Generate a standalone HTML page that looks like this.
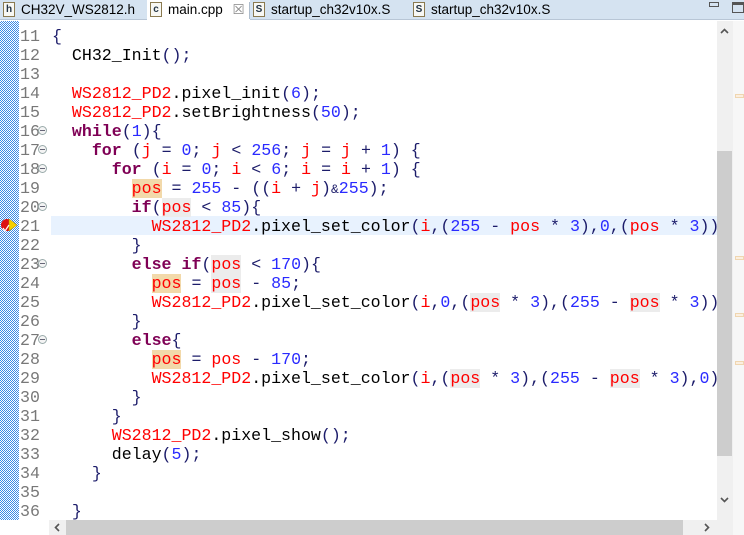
<!DOCTYPE html>
<html><head><meta charset="utf-8"><style>
*{margin:0;padding:0;box-sizing:border-box}
body{width:744px;height:535px;overflow:hidden;background:#fff;position:relative;font-family:"Liberation Sans",sans-serif}
#tabs{position:absolute;left:0;top:0;width:744px;height:20px;background:#d5e3f1;border-bottom:1px solid #b8c6d6}
.tab{position:absolute;top:0;height:20px;font-size:13.5px;color:#000;line-height:19px;padding-left:21px}
.tab .ic{position:absolute;left:3px;top:2px;width:12px;height:15px;border:1px solid #8a7a50;background:#f8f8f4;font-size:10px;line-height:13px;text-align:center;color:#234;font-weight:bold}
.tab.act{background:#fff;height:21px}
.sep{position:absolute;top:2px;width:1px;height:17px;background:#aebdcd}
#gut{position:absolute;left:0;top:21px;width:19px;height:499px;
background-color:#fff;background-image:linear-gradient(45deg,#3a8ae6 25%,transparent 25%,transparent 75%,#3a8ae6 75%),linear-gradient(45deg,#3a8ae6 25%,transparent 25%,transparent 75%,#3a8ae6 75%);background-size:2px 2px;background-position:0 0,1px 1px}
.ln{position:absolute;left:20px;height:19px;font-family:"Liberation Mono",monospace;font-size:16.6px;color:#787878;line-height:19px}
.fold{position:absolute;left:38px;width:9px;height:9px;border:1px solid #9aa;border-radius:50%;background:#f4f4f4}
.fold:after{content:"";position:absolute;left:1px;top:3px;width:5px;height:1px;background:#667}
#cur{position:absolute;left:51px;top:216px;width:666px;height:19px;background:#e8f2fe}
.cl{position:absolute;left:52px;height:19px;font-family:"Liberation Mono",monospace;font-size:16.6px;line-height:19px;white-space:pre;color:#000}
.k{color:#7f0055;font-weight:bold}.r{color:#f00}.n{color:#2a2aff}.o{color:#1c1c6a}
.w{background:#f2d9aa}.rd{background:#ececec}
#vs{position:absolute;left:717px;top:21px;width:16px;height:499px;background:#f0f0f0}
#vth{position:absolute;left:717px;top:151px;width:15px;height:305px;background:#cdcdcd}
#ov{position:absolute;left:733px;top:21px;width:11px;height:514px;background:#f7f7f7}
.om{position:absolute;left:735px;width:9px;height:4px;border:1px solid #f0d6b0;background:#fbefe0}
#hs{position:absolute;left:49px;top:520px;width:684px;height:15px;background:#f0f0f0}
#hth{position:absolute;left:66px;top:520px;width:617px;height:15px;background:#cdcdcd}
</style></head><body>
<div id="tabs">
<div class="tab" style="left:0;width:147px"><span class="ic">h</span>CH32V_WS2812.h</div>
<div class="tab act" style="left:147px;width:103px"><span class="ic">c</span>main.cpp <span style="color:#888;margin-left:6px">☒</span></div>
<div class="tab" style="left:250px;width:160px"><span class="ic">S</span>startup_ch32v10x.S</div>
<div class="sep" style="left:249px"></div>
<div class="tab" style="left:410px;width:150px"><span class="ic">S</span>startup_ch32v10x.S</div>
<div style="position:absolute;left:709px;top:2px;width:10px;height:5px;border:1px solid #555"></div>
<div style="position:absolute;left:732px;top:2px;width:12px;height:11px;border:1px solid #555;border-top-width:3px"></div>
</div>
<div id="gut"></div>
<div id="cur"></div>
<svg style="position:absolute;left:0;top:217px" width="19" height="17"><circle cx="7" cy="8" r="6" fill="#d11"/><polygon points="9,2 17,8 9,14" fill="#f5d000" stroke="#a80" stroke-width="0.5"/><path d="M3 11 L5 14 L9 8" stroke="#fff" fill="none" stroke-width="1.2"/></svg>

<div class="ln" style="top:27px">11</div><div class="ln" style="top:46px">12</div><div class="ln" style="top:65px">13</div><div class="ln" style="top:84px">14</div><div class="ln" style="top:103px">15</div><div class="ln" style="top:122px">16</div><div class="ln" style="top:141px">17</div><div class="ln" style="top:160px">18</div><div class="ln" style="top:179px">19</div><div class="ln" style="top:198px">20</div><div class="ln" style="top:217px">21</div><div class="ln" style="top:236px">22</div><div class="ln" style="top:255px">23</div><div class="ln" style="top:274px">24</div><div class="ln" style="top:293px">25</div><div class="ln" style="top:312px">26</div><div class="ln" style="top:331px">27</div><div class="ln" style="top:350px">28</div><div class="ln" style="top:369px">29</div><div class="ln" style="top:388px">30</div><div class="ln" style="top:407px">31</div><div class="ln" style="top:426px">32</div><div class="ln" style="top:445px">33</div><div class="ln" style="top:464px">34</div><div class="ln" style="top:483px">35</div><div class="ln" style="top:502px">36</div>
<div class="fold" style="top:126px"></div><div class="fold" style="top:145px"></div><div class="fold" style="top:164px"></div><div class="fold" style="top:202px"></div><div class="fold" style="top:259px"></div><div class="fold" style="top:335px"></div>

<div class="cl" style="top:27px"><span class="o">{</span></div>
<div class="cl" style="top:46px">  CH32_Init<span class="o">();</span></div>
<div class="cl" style="top:84px">  <span class="r">WS2812_PD2</span>.pixel_init<span class="o">(</span><span class="n">6</span><span class="o">);</span></div>
<div class="cl" style="top:103px">  <span class="r">WS2812_PD2</span>.setBrightness<span class="o">(</span><span class="n">50</span><span class="o">);</span></div>
<div class="cl" style="top:122px">  <span class="k">while</span><span class="o">(</span><span class="n">1</span><span class="o">){</span></div>
<div class="cl" style="top:141px">    <span class="k">for</span> <span class="o">(</span><span class="r">j</span> <span class="o">=</span> <span class="n">0</span><span class="o">;</span> <span class="r">j</span> <span class="o">&lt;</span> <span class="n">256</span><span class="o">;</span> <span class="r">j</span> <span class="o">=</span> <span class="r">j</span> <span class="o">+</span> <span class="n">1</span><span class="o">)</span> <span class="o">{</span></div>
<div class="cl" style="top:160px">      <span class="k">for</span> <span class="o">(</span><span class="r">i</span> <span class="o">=</span> <span class="n">0</span><span class="o">;</span> <span class="r">i</span> <span class="o">&lt;</span> <span class="n">6</span><span class="o">;</span> <span class="r">i</span> <span class="o">=</span> <span class="r">i</span> <span class="o">+</span> <span class="n">1</span><span class="o">)</span> <span class="o">{</span></div>
<div class="cl" style="top:179px">        <span class="r w">pos</span> <span class="o">=</span> <span class="n">255</span> <span class="o">-</span> <span class="o">((</span><span class="r">i</span> <span class="o">+</span> <span class="r">j</span><span class="o">)</span><span class="o" style="font-size:13px">&amp;</span><span class="n">255</span><span class="o">);</span></div>
<div class="cl" style="top:198px">        <span class="k">if</span><span class="o">(</span><span class="r rd">pos</span> <span class="o">&lt;</span> <span class="n">85</span><span class="o">){</span></div>
<div class="cl" style="top:217px">          <span class="r">WS2812_PD2</span>.pixel_set_color<span class="o">(</span><span class="r">i</span><span class="o">,(</span><span class="n">255</span> <span class="o">-</span> <span class="r">pos</span> <span class="o">*</span> <span class="n">3</span><span class="o">),</span><span class="n">0</span><span class="o">,(</span><span class="r">pos</span> <span class="o">*</span> <span class="n">3</span><span class="o">))</span></div>
<div class="cl" style="top:236px">        <span class="o">}</span></div>
<div class="cl" style="top:255px">        <span class="k">else</span> <span class="k">if</span><span class="o">(</span><span class="r rd">pos</span> <span class="o">&lt;</span> <span class="n">170</span><span class="o">){</span></div>
<div class="cl" style="top:274px">          <span class="r w">pos</span> <span class="o">=</span> <span class="r rd">pos</span> <span class="o">-</span> <span class="n">85</span><span class="o">;</span></div>
<div class="cl" style="top:293px">          <span class="r">WS2812_PD2</span>.pixel_set_color<span class="o">(</span><span class="r">i</span><span class="o">,</span><span class="n">0</span><span class="o">,(</span><span class="r rd">pos</span> <span class="o">*</span> <span class="n">3</span><span class="o">),(</span><span class="n">255</span> <span class="o">-</span> <span class="r rd">pos</span> <span class="o">*</span> <span class="n">3</span><span class="o">))</span></div>
<div class="cl" style="top:312px">        <span class="o">}</span></div>
<div class="cl" style="top:331px">        <span class="k">else</span><span class="o">{</span></div>
<div class="cl" style="top:350px">          <span class="r w">pos</span> <span class="o">=</span> <span class="r">pos</span> <span class="o">-</span> <span class="n">170</span><span class="o">;</span></div>
<div class="cl" style="top:369px">          <span class="r">WS2812_PD2</span>.pixel_set_color<span class="o">(</span><span class="r">i</span><span class="o">,(</span><span class="r rd">pos</span> <span class="o">*</span> <span class="n">3</span><span class="o">),(</span><span class="n">255</span> <span class="o">-</span> <span class="r rd">pos</span> <span class="o">*</span> <span class="n">3</span><span class="o">),</span><span class="n">0</span><span class="o">)</span></div>
<div class="cl" style="top:388px">        <span class="o">}</span></div>
<div class="cl" style="top:407px">      <span class="o">}</span></div>
<div class="cl" style="top:426px">      <span class="r">WS2812_PD2</span>.pixel_show<span class="o">();</span></div>
<div class="cl" style="top:445px">      delay<span class="o">(</span><span class="n">5</span><span class="o">);</span></div>
<div class="cl" style="top:464px">    <span class="o">}</span></div>
<div class="cl" style="top:502px">  <span class="o">}</span></div>

<div id="vs"></div><div id="vth"></div>
<svg style="position:absolute;left:717px;top:25px" width="15" height="12"><path d="M4 8 L7.5 4.5 L11 8" stroke="#555" stroke-width="1.6" fill="none"/></svg>
<svg style="position:absolute;left:717px;top:494px" width="15" height="12"><path d="M4 4 L7.5 7.5 L11 4" stroke="#555" stroke-width="1.6" fill="none"/></svg>
<div id="ov"></div>
<div class="om" style="top:94px"></div><div class="om" style="top:256px"></div><div class="om" style="top:313px"></div><div class="om" style="top:361px"></div>
<div id="hs"></div><div id="hth"></div>
<svg style="position:absolute;left:51px;top:521px" width="14" height="13"><path d="M8 3 L4.5 6.5 L8 10" stroke="#555" stroke-width="1.6" fill="none"/></svg>
<svg style="position:absolute;left:700px;top:521px" width="14" height="13"><path d="M5 3 L8.5 6.5 L5 10" stroke="#555" stroke-width="1.6" fill="none"/></svg>
</body></html>
